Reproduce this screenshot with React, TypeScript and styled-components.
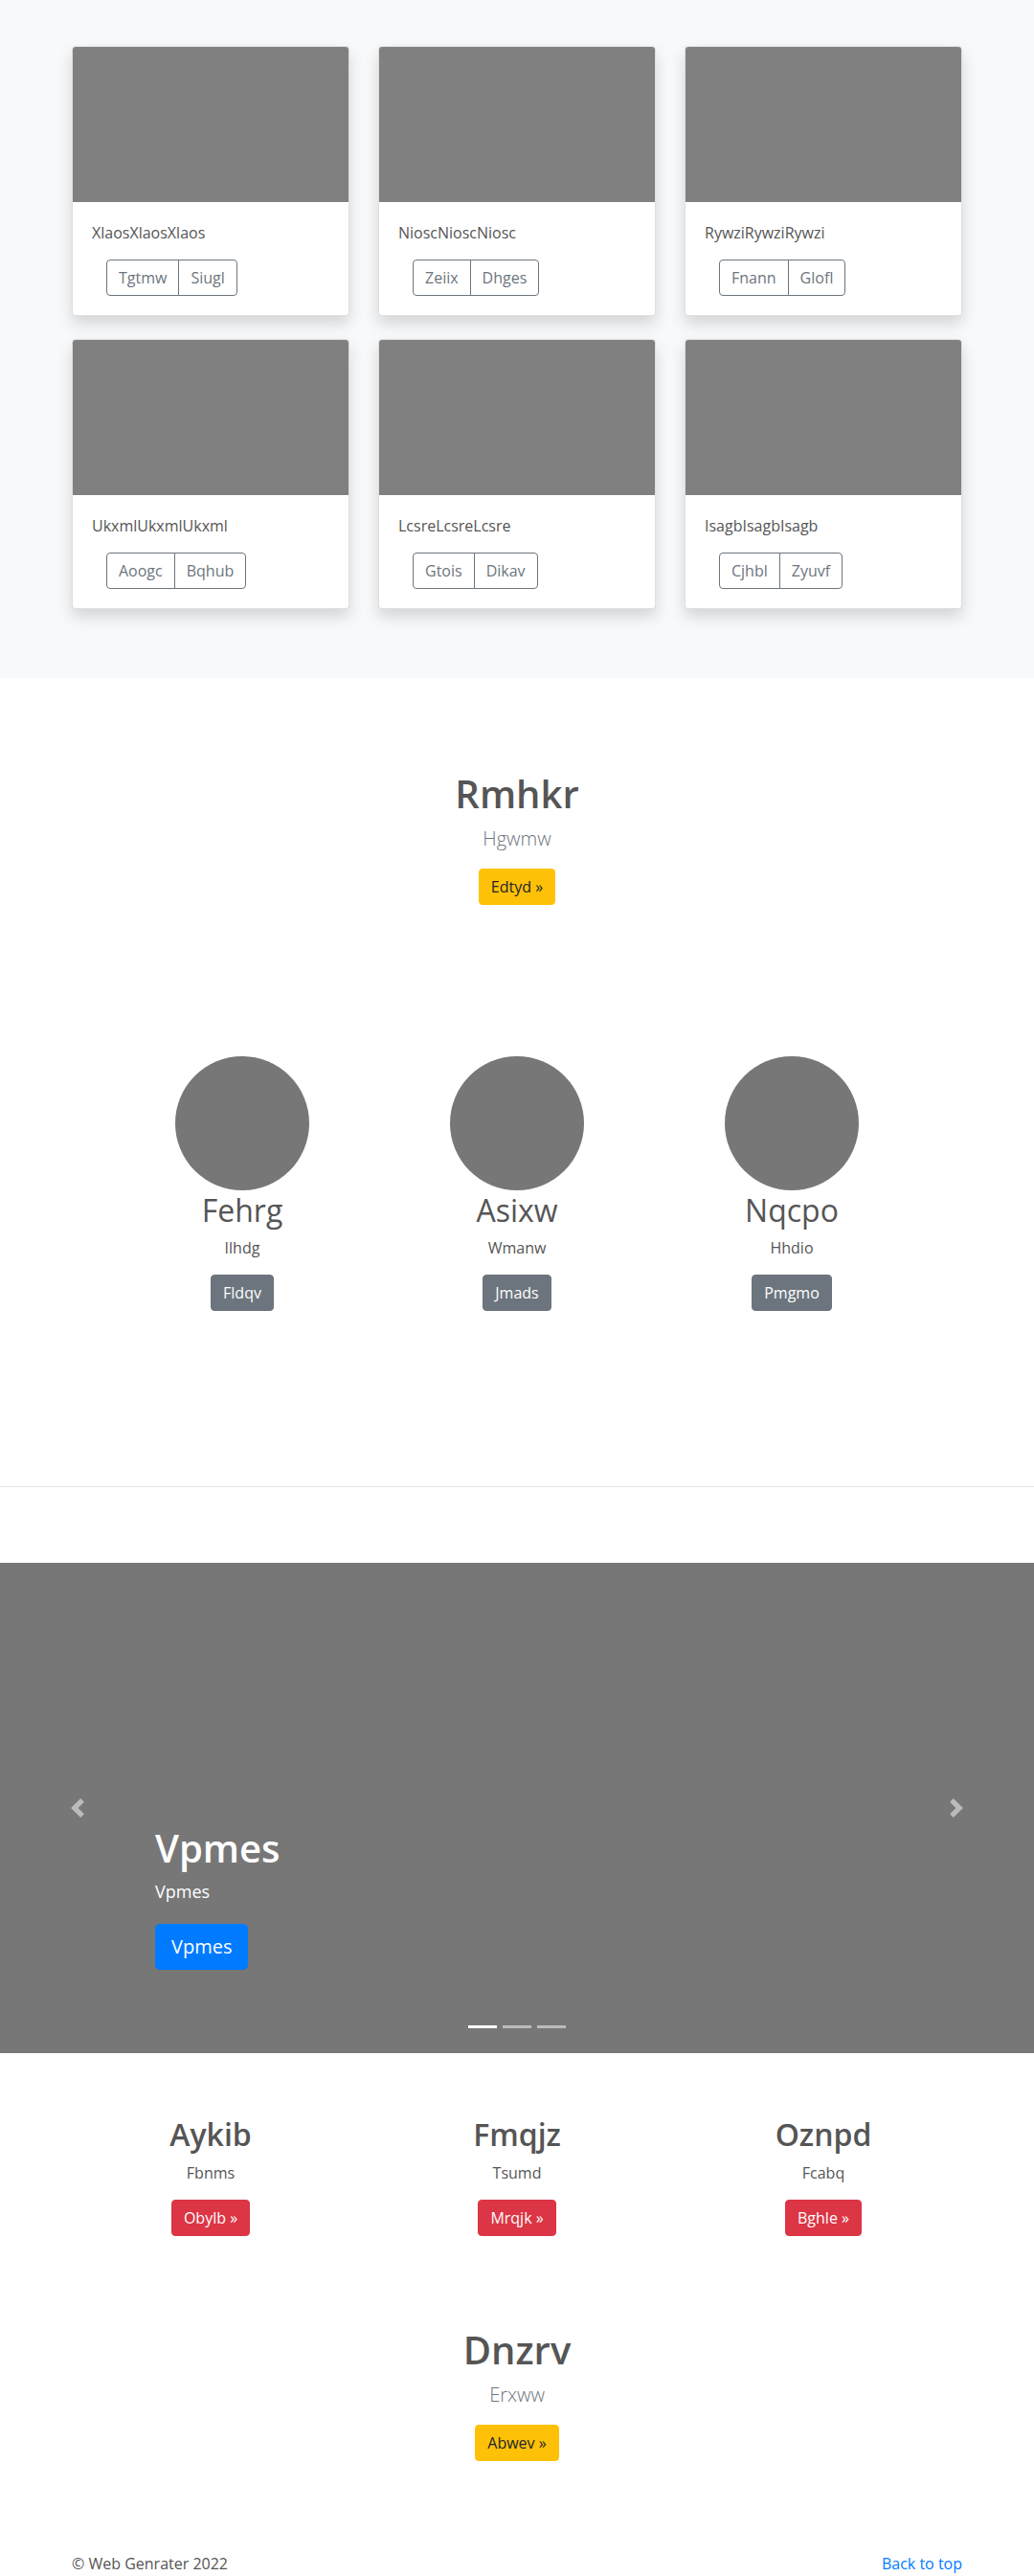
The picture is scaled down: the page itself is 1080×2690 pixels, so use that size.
import React from 'react';
import styled, { createGlobalStyle, css } from 'styled-components';

const GlobalStyle = createGlobalStyle`
  *, *::before, *::after { box-sizing: border-box; }
  body {
    margin: 0;
    font-family: "Open Sans", "Noto Sans", sans-serif;
    font-size: 16px;
    line-height: 1.5;
    color: #555;
    background: #fff;
  }
`;

type Variant = 'warning' | 'secondary' | 'danger' | 'primary';

const variants: Record<Variant, ReturnType<typeof css>> = {
  warning: css`background: #ffc107; border-color: #ffc107; color: #212529;`,
  secondary: css`background: #6c757d; border-color: #6c757d; color: #fff;`,
  danger: css`background: #dc3545; border-color: #dc3545; color: #fff;`,
  primary: css`background: #007bff; border-color: #007bff; color: #fff;`,
};

const Button = styled.a<{ $variant: Variant; $large?: boolean }>`
  display: inline-block;
  font-family: inherit;
  font-size: ${(p) => (p.$large ? '20px' : '16px')};
  line-height: ${(p) => (p.$large ? '30px' : '24px')};
  padding: ${(p) => (p.$large ? '8px 16px' : '6px 12px')};
  border: 1px solid transparent;
  border-radius: ${(p) => (p.$large ? '4.8px' : '4px')};
  text-decoration: none;
  cursor: pointer;
  ${(p) => variants[p.$variant]}
`;

/* ---------- Album ---------- */
const Album = styled.section`
  background: #f8f9fa;
  padding: 48px 0 72px;
`;

const Container = styled.div`
  width: 960px;
  margin: 0 auto;
  padding: 0 15px;
`;

const CardGrid = styled.div`
  display: grid;
  grid-template-columns: repeat(3, 290px);
  column-gap: 30px;
  row-gap: 24px;
`;

const Card = styled.div`
  background: #fff;
  border: 1px solid rgba(0, 0, 0, 0.125);
  border-radius: 4px;
  overflow: hidden;
  box-shadow: 0 8px 16px rgba(0, 0, 0, 0.15);
`;

const CardImage = styled.div`
  height: 162px;
  background: #808080;
`;

const CardBody = styled.div`
  padding: 20px;
`;

const CardText = styled.p`
  margin: 0 0 16px;
  color: #555;
`;

const BtnGroup = styled.div`
  display: inline-flex;
  margin-left: 15px;
`;

const OutlineBtn = styled.button`
  font-family: inherit;
  font-size: 16px;
  line-height: 24px;
  padding: 6px 12px;
  background: transparent;
  color: #6c757d;
  border: 1px solid #6c757d;
  border-radius: 0;
  &:first-child { border-radius: 4px 0 0 4px; }
  &:last-child { border-radius: 0 4px 4px 0; margin-left: -1px; }
`;

/* ---------- Hero ---------- */
const Hero = styled.section<{ $top: number }>`
  display: flex;
  flex-direction: column;
  align-items: center;
  text-align: center;
  padding-top: ${(p) => p.$top}px;
`;

const HeroTitle = styled.h1`
  margin: 0 0 8px;
  font-size: 40px;
  font-weight: 600;
  line-height: 1.2;
  color: #555;
`;

const Lead = styled.p`
  margin: 0 0 16px;
  font-size: 20px;
  line-height: 30px;
  font-weight: 300;
  color: #6c757d;
`;

/* ---------- Marketing ---------- */
const Marketing = styled.section`
  padding-top: 158px;
`;

const MarketingRow = styled.div`
  display: grid;
  grid-template-columns: repeat(3, 287px);
  width: 861px;
  margin: 0 auto;
`;

const MarketingCol = styled.div`
  display: flex;
  flex-direction: column;
  align-items: center;
  text-align: center;
`;

const Circle = styled.div`
  width: 140px;
  height: 140px;
  border-radius: 50%;
  background: #777;
  margin-bottom: 2px;
`;

const ColTitle = styled.h2<{ $bold?: boolean }>`
  margin: 0 0 8px;
  font-size: 32px;
  line-height: 1.2;
  font-weight: ${(p) => (p.$bold ? 600 : 400)};
  color: #555;
`;

const ColText = styled.p`
  margin: 0 0 16px;
  color: #555;
`;

const Divider = styled.hr`
  border: 0;
  border-top: 1px solid rgba(0, 0, 0, 0.1);
  margin: 183px 0 79px;
`;

/* ---------- Carousel ---------- */
const Carousel = styled.section`
  position: relative;
  height: 512px;
  background: #777;
  display: flex;
  align-items: flex-end;
`;

const Caption = styled.div`
  margin: 0 15% 87px;
  color: #fff;
  display: flex;
  flex-direction: column;
  align-items: flex-start;
`;

const CaptionTitle = styled.h1`
  margin: 0 0 8px;
  font-size: 40px;
  line-height: 1.2;
  font-weight: 600;
`;

const CaptionText = styled.p`
  margin: 0 0 20px;
  font-size: 18px;
  line-height: 27px;
  font-weight: 500;
`;

const Control = styled.a<{ $side: 'left' | 'right' }>`
  position: absolute;
  top: 0;
  bottom: 0;
  ${(p) => (p.$side === 'left' ? 'left: 0;' : 'right: 0;')}
  width: 15%;
  display: flex;
  align-items: center;
  justify-content: center;
  opacity: 0.5;
`;

const Indicators = styled.ol`
  position: absolute;
  left: 0;
  right: 0;
  bottom: 26px;
  margin: 0;
  padding: 0;
  list-style: none;
  display: flex;
  justify-content: center;
  gap: 6px;
`;

const Indicator = styled.li<{ $active?: boolean }>`
  width: 30px;
  height: 3px;
  background: #fff;
  opacity: ${(p) => (p.$active ? 1 : 0.5)};
`;

/* ---------- Features ---------- */
const Features = styled.section`
  padding-top: 66px;
`;

const FeatureRow = styled.div`
  display: grid;
  grid-template-columns: repeat(3, 320px);
  width: 960px;
  margin: 0 auto;
`;

/* ---------- Footer ---------- */
const Footer = styled.footer`
  padding-top: 95px;
`;

const FooterInner = styled.div`
  width: 960px;
  margin: 0 auto;
  padding: 0 15px;
  display: flex;
  justify-content: space-between;
`;

const FooterText = styled.p`
  margin: 0;
  color: #555;
`;

const FooterLink = styled.a`
  color: #007bff;
  text-decoration: none;
`;

const cards = [
  { title: 'XlaosXlaosXlaos', a: 'Tgtmw', b: 'Siugl' },
  { title: 'NioscNioscNiosc', a: 'Zeiix', b: 'Dhges' },
  { title: 'RywziRywziRywzi', a: 'Fnann', b: 'Glofl' },
  { title: 'UkxmlUkxmlUkxml', a: 'Aoogc', b: 'Bqhub' },
  { title: 'LcsreLcsreLcsre', a: 'Gtois', b: 'Dikav' },
  { title: 'IsagbIsagbIsagb', a: 'Cjhbl', b: 'Zyuvf' },
];

const people = [
  { name: 'Fehrg', sub: 'Ilhdg', btn: 'Fldqv' },
  { name: 'Asixw', sub: 'Wmanw', btn: 'Jmads' },
  { name: 'Nqcpo', sub: 'Hhdio', btn: 'Pmgmo' },
];

const features = [
  { name: 'Aykib', sub: 'Fbnms', btn: 'Obylb »' },
  { name: 'Fmqjz', sub: 'Tsumd', btn: 'Mrqjk »' },
  { name: 'Oznpd', sub: 'Fcabq', btn: 'Bghle »' },
];

const Chevron = ({ dir }: { dir: 'prev' | 'next' }) => (
  <svg width="20" height="20" viewBox="0 0 8 8" fill="#fff">
    {dir === 'prev' ? (
      <path d="M5.25 0l-4 4 4 4 1.5-1.5L4.25 4l2.5-2.5L5.25 0z" />
    ) : (
      <path d="M2.75 0l-1.5 1.5L3.75 4l-2.5 2.5L2.75 8l4-4-4-4z" />
    )}
  </svg>
);

export default function App() {
  return (
    <>
      <GlobalStyle />
      <Album>
        <Container>
          <CardGrid>
            {cards.map((c) => (
              <Card key={c.title}>
                <CardImage />
                <CardBody>
                  <CardText>{c.title}</CardText>
                  <BtnGroup>
                    <OutlineBtn>{c.a}</OutlineBtn>
                    <OutlineBtn>{c.b}</OutlineBtn>
                  </BtnGroup>
                </CardBody>
              </Card>
            ))}
          </CardGrid>
        </Container>
      </Album>

      <Hero $top={97}>
        <HeroTitle>Rmhkr</HeroTitle>
        <Lead>Hgwmw</Lead>
        <Button $variant="warning">Edtyd »</Button>
      </Hero>

      <Marketing>
        <MarketingRow>
          {people.map((p) => (
            <MarketingCol key={p.name}>
              <Circle />
              <ColTitle>{p.name}</ColTitle>
              <ColText>{p.sub}</ColText>
              <Button $variant="secondary">{p.btn}</Button>
            </MarketingCol>
          ))}
        </MarketingRow>
      </Marketing>

      <Divider />

      <Carousel>
        <Caption>
          <CaptionTitle>Vpmes</CaptionTitle>
          <CaptionText>Vpmes</CaptionText>
          <Button $variant="primary" $large>Vpmes</Button>
        </Caption>
        <Control $side="left"><Chevron dir="prev" /></Control>
        <Control $side="right"><Chevron dir="next" /></Control>
        <Indicators>
          <Indicator $active />
          <Indicator />
          <Indicator />
        </Indicators>
      </Carousel>

      <Features>
        <FeatureRow>
          {features.map((f) => (
            <MarketingCol key={f.name}>
              <ColTitle $bold>{f.name}</ColTitle>
              <ColText>{f.sub}</ColText>
              <Button $variant="danger">{f.btn}</Button>
            </MarketingCol>
          ))}
        </FeatureRow>
      </Features>

      <Hero $top={95}>
        <HeroTitle>Dnzrv</HeroTitle>
        <Lead>Erxww</Lead>
        <Button $variant="warning">Abwev »</Button>
      </Hero>

      <Footer>
        <FooterInner>
          <FooterText>© Web Genrater 2022</FooterText>
          <FooterLink href="#">Back to top</FooterLink>
        </FooterInner>
      </Footer>
    </>
  );
}
